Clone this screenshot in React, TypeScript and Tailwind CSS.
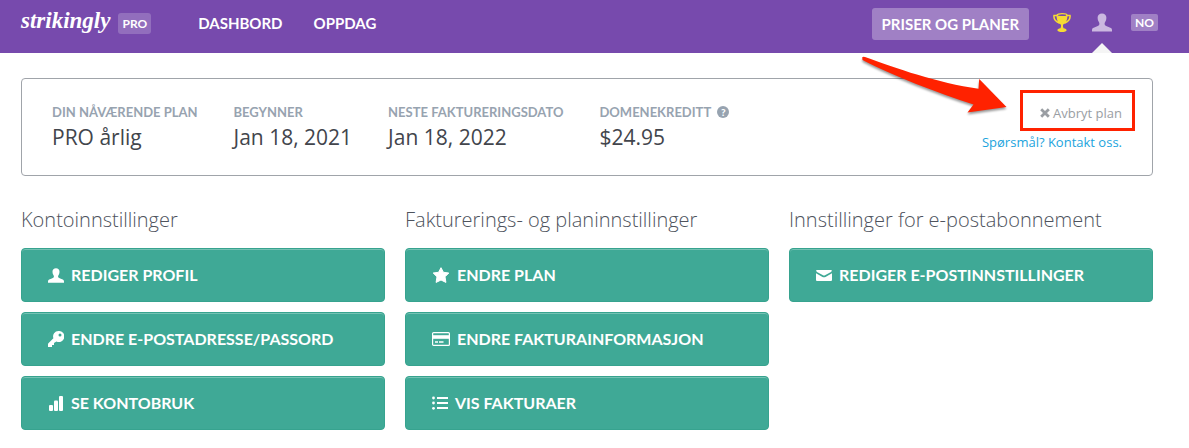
import React from 'react';

type IconProps = { className?: string };

const UserIcon: React.FC<IconProps> = ({ className }) => (
  <svg viewBox="0 0 20 18" fill="currentColor" aria-hidden="true" className={className}>
    <path d="M10 0C7.300 0 5.600 1.700 5.600 4.300C5.600 5.800 6 7.200 6.700 8.300C7.400 9.400 7.500 10.100 7.300 11C7 12 5.800 12.500 4 13.200C1.400 14.100 0 14.700 0 16.400V18H20V16.400C20 14.700 18.600 14.100 16 13.200C14.200 12.500 13 12 12.700 11C12.500 10.100 12.600 9.400 13.300 8.300C14 7.200 14.400 5.800 14.400 4.300C14.400 1.700 12.700 0 10 0Z" />
  </svg>
);

const TrophyIcon: React.FC<IconProps> = ({ className }) => (
  <svg viewBox="0 0 18 19" fill="none" stroke="currentColor" aria-hidden="true" className={className}>
    <path d="M4 2.500H1C.4 6.500 3 8.700 6.600 10.200M14 2.500H17C17.600 6.500 15 8.700 11.400 10.200" strokeWidth="1.500" />
    <path d="M3.600 2C3.600 7.500 5 10 8 11.800V14.500H10V11.800C13 10 14.400 7.500 14.400 2Z" fill="currentColor" stroke="none" />
    <ellipse cx="9" cy="2.200" rx="5" ry="1.500" fill="#774aad" strokeWidth="1.300" />
    <path d="M8 13.500H10L10.500 15.200C12.500 15.500 13.600 16.200 13.600 17.200C13.600 18.400 11.500 19 9 19C6.500 19 4.400 18.400 4.400 17.200C4.400 16.200 5.500 15.500 7.500 15.200Z" fill="currentColor" stroke="none" />
  </svg>
);

const KeyIcon: React.FC<IconProps> = ({ className }) => (
  <svg viewBox="0 0 16 16" fill="currentColor" fillRule="evenodd" aria-hidden="true" className={className}>
    <path d="M10.500 0A5.400 5.400 0 0 0 5.400 7.200L.4 12.200Q0 12.600 0 13.100V16H4V14H6V12L8.400 10.400A5.500 5.500 0 1 0 10.500 0ZM12 2.500A1.500 1.500 0 1 1 12 5.500A1.500 1.500 0 0 1 12 2.500Z" />
  </svg>
);

const BarsIcon: React.FC<IconProps> = ({ className }) => (
  <svg viewBox="0 0 16 16" fill="currentColor" aria-hidden="true" className={className}>
    <rect x="1" y="10" width="4" height="6" rx="1" />
    <rect x="6" y="5.500" width="4" height="10.500" rx="1" />
    <rect x="11" y="1" width="4" height="15" rx="1" />
  </svg>
);

const StarIcon: React.FC<IconProps> = ({ className }) => (
  <svg viewBox="0 0 17 16" fill="currentColor" stroke="currentColor" strokeLinejoin="round" aria-hidden="true" className={className}>
    <path d="M8.500 .7L10.900 5.300L16.300 6L12.500 9.800L13.400 15.400L8.500 13L3.600 15.400L4.500 9.800L.7 6L6.100 5.300Z" />
  </svg>
);

const CardIcon: React.FC<IconProps> = ({ className }) => (
  <svg viewBox="0 0 18 14" fill="none" stroke="currentColor" aria-hidden="true" className={className}>
    <rect x=".6" y=".6" width="16.800" height="12.800" rx="1" strokeWidth="1.200" />
    <path d="M1 5H17" strokeWidth="3.600" />
    <path d="M3 10H6M7 10H11.500" strokeWidth="1.600" />
  </svg>
);

const ListIcon: React.FC<IconProps> = ({ className }) => (
  <svg viewBox="0 0 16 14" fill="currentColor" aria-hidden="true" className={className}>
    <circle cx="1.500" cy="2" r="1.400" />
    <circle cx="1.500" cy="7" r="1.400" />
    <circle cx="1.500" cy="12.300" r="1.400" />
    <rect x="5" y="1" width="11" height="2" />
    <rect x="5" y="6" width="11" height="2" />
    <rect x="5" y="11" width="11" height="2" />
  </svg>
);

const MailIcon: React.FC<IconProps> = ({ className }) => (
  <svg viewBox="0 0 16 11" fill="currentColor" aria-hidden="true" className={className}>
    <path d="M.4 0H15.600C15.900 .9 15.600 1.500 15 1.900L9 5.200Q8 5.700 7 5.200L1 1.900C.4 1.500 .1 .9 .4 0Z" />
    <path d="M0 3.200L6.500 6.900Q8 7.600 9.500 6.900L16 3.200V10Q16 11 15 11H1Q0 11 0 10Z" />
  </svg>
);

const CrossIcon: React.FC<IconProps> = ({ className }) => (
  <svg viewBox="0 0 10 10" stroke="currentColor" strokeWidth="2.800" aria-hidden="true" className={className}>
    <path d="M1.200 1.200L8.800 8.800M8.800 1.200L1.200 8.800" />
  </svg>
);

const planDetails = [
  { label: 'DIN NÅVÆRENDE PLAN', value: 'PRO årlig' },
  { label: 'BEGYNNER', value: 'Jan 18, 2021' },
  { label: 'NESTE FAKTURERINGSDATO', value: 'Jan 18, 2022' },
  { label: 'DOMENEKREDITT', value: '$24.95', help: true },
];

const sections = [
  {
    title: 'Kontoinnstillinger',
    actions: [
      { label: 'REDIGER PROFIL', icon: <UserIcon className="h-[15px] w-4" /> },
      { label: 'ENDRE E-POSTADRESSE/PASSORD', icon: <KeyIcon className="size-4" /> },
      { label: 'SE KONTOBRUK', icon: <BarsIcon className="size-4" /> },
    ],
  },
  {
    title: 'Fakturerings- og planinnstillinger',
    actions: [
      { label: 'ENDRE PLAN', icon: <StarIcon className="h-4 w-[18px]" /> },
      { label: 'ENDRE FAKTURAINFORMASJON', icon: <CardIcon className="h-[14px] w-[18px]" /> },
      { label: 'VIS FAKTURAER', icon: <ListIcon className="h-[14px] w-4" /> },
    ],
  },
  {
    title: 'Innstillinger for e-postabonnement',
    actions: [
      { label: 'REDIGER E-POSTINNSTILLINGER', icon: <MailIcon className="h-[11px] w-4" /> },
    ],
  },
];

const Header: React.FC = () => (
  <header className="flex h-[53px] items-start justify-between bg-[#774aad] pr-[31px] pl-[21px] font-[Lato,sans-serif] font-bold text-white">
    <div className="flex h-[46px] items-center">
      <a href="#" className="pb-1 font-['Liberation_Serif',serif] text-[23px] leading-6 italic">strikingly</a>
      <span className="ml-2 rounded-[3px] bg-white/20 px-1 text-xs leading-[21px]">PRO</span>
      <nav className="ml-[47px] flex gap-[31px] text-[15px] leading-5">
        <a href="#">DASHBORD</a>
        <a href="#">OPPDAG</a>
      </nav>
    </div>
    <div className="flex h-full items-start pt-2">
      <button className="h-8 rounded-[3px] bg-white/30 px-[10px] text-[15px]">PRISER OG PLANER</button>
      <button aria-label="Trophy" className="mt-[5px] ml-6 text-[#f7dc33]">
        <TrophyIcon className="h-[19px] w-[18px]" />
      </button>
      <button aria-label="Profil" className="ml-[21px] flex h-full flex-col items-center justify-between pt-[5px] text-[#cbb8e0]">
        <UserIcon className="h-[19px] w-5" />
        <svg viewBox="0 0 20 10" className="h-[10px] w-5" aria-hidden="true">
          <path d="M0 10L10 0L20 10Z" fill="#f5f5f5" />
        </svg>
      </button>
      <button className="mt-[6px] ml-[19px] rounded-[2px] bg-white/30 px-1 text-xs leading-[17px]">NO</button>
    </div>
  </header>
);

const PlanCard: React.FC = () => (
  <section className="relative flex h-[98px] items-start justify-between rounded-[4px] border border-[#a0a4aa] pr-[30px] pl-[30px]">
    <dl className="flex gap-9 pt-6">
      {planDetails.map((item) => (
        <div key={item.label}>
          <dt className="flex items-center gap-[6px] font-[Lato,sans-serif] text-[13px] leading-[18px] font-bold text-[#97a3b0]">
            {item.label}
            {item.help && (
              <span className="flex size-3 items-center justify-center rounded-full bg-[#97a3b0] text-[10px] leading-3 font-black text-white">?</span>
            )}
          </dt>
          <dd className="text-[21px] leading-8 text-[#42454c]">{item.value}</dd>
        </div>
      ))}
    </dl>
    <div className="flex flex-col items-end pt-[11px] text-[13px]">
      {/* red frame reaches past the text on the right */}
      <div className="-mr-[13px] flex h-[41px] items-center border-3 border-[#ff2200] pr-[10px] pl-[17px]">
        <button className="flex items-center gap-[3px] pt-1 leading-5 text-[#9a9ea3]">
          <CrossIcon className="size-[10px]" />
          Avbryt plan
        </button>
      </div>
      <a href="#" className="mt-px leading-5 text-[#1ca4dd]">Spørsmål? Kontakt oss.</a>
    </div>
    <svg viewBox="0 0 160 70" className="absolute -top-[29px] right-[137px] h-[70px] w-40 drop-shadow-[0_2px_1px_rgba(0,0,0,0.4)]" aria-hidden="true">
      <path d="M7.200 7.200Q8 6.500 10 7C40 18 83 33 123.500 38.800L124.200 29L151.500 57L112.500 62.500L118.500 54.500C83 43 38 26 7.500 10Z" fill="#ff2200" />
    </svg>
  </section>
);

const App: React.FC = () => {
  return (
    <div className="bg-white font-['Open_Sans',sans-serif]">
      <Header />
      <main className="pt-[25px] pr-9 pb-4 pl-[21px]">
        <PlanCard />
        <div className="mt-7 grid grid-cols-3 gap-5">
          {sections.map((section) => (
            <section key={section.title}>
              <h2 className="text-xl leading-8 font-light text-[#4e535d]">{section.title}</h2>
              <div className="mt-3 flex flex-col gap-[10px]">
                {section.actions.map((action) => (
                  <button
                    key={action.label}
                    className="flex h-[54px] items-center gap-[7px] rounded-[4px] border border-[#37a38f] bg-[#3fa996] pl-[26px] font-[Lato,sans-serif] text-base font-bold text-white shadow-[inset_0_1px_0_#75c2b4]"
                  >
                    {action.icon}
                    {action.label}
                  </button>
                ))}
              </div>
            </section>
          ))}
        </div>
      </main>
    </div>
  );
};

export default App;
